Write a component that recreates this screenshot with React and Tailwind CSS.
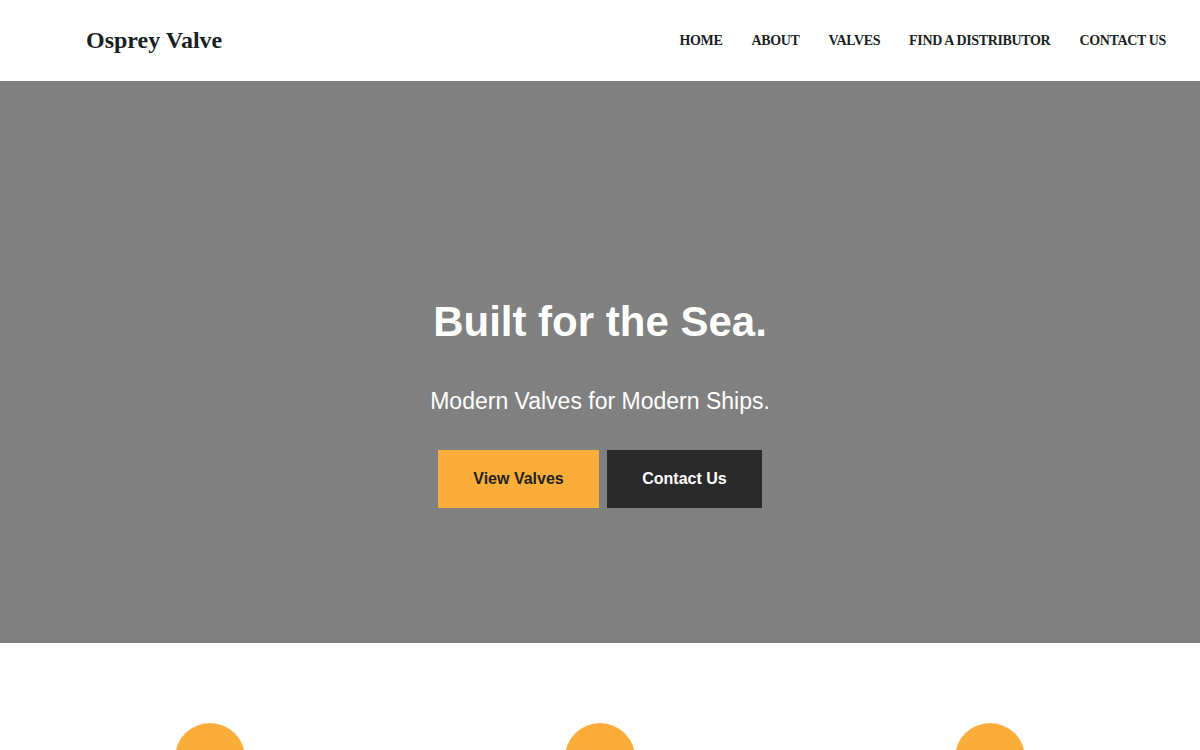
export default function App() {
  const serif = { fontFamily: '"Liberation Serif", "Times New Roman", serif' };
  const sans = { fontFamily: '"Liberation Sans", Arial, sans-serif' };
  const nav = ["HOME", "ABOUT", "VALVES", "FIND A DISTRIBUTOR", "CONTACT US"];
  return (
    <div className="w-full bg-white" style={sans}>
      <header className="h-[81px] flex items-center justify-between pl-[86px] pr-[34px] bg-white">
        <div className="text-[24px] font-bold text-[#1a1f24] leading-none -mt-[2px]" style={serif}>
          Osprey Valve
        </div>
        <nav className="flex items-center gap-[29px]" style={serif}>
          {nav.map((n) => (
            <a key={n} className="text-[14px] tracking-[-0.35px] font-bold text-[#1a1f24] leading-none">
              {n}
            </a>
          ))}
        </nav>
      </header>
      <section className="h-[562px] bg-[#808080] flex flex-col items-center pt-[216px]">
        <h1 className="text-[42px] font-bold text-white leading-[1.2]">Built for the Sea.</h1>
        <p className="mt-[41px] text-[23px] text-white leading-[1.2]">Modern Valves for Modern Ships.</p>
        <div className="mt-[34px] flex gap-[8px]">
          <button className="bg-[#fbad3a] text-[#1f1f1f] font-bold text-[16px] leading-[18px] py-5 w-[161px]">
            View Valves
          </button>
          <button className="bg-[#2a2a2a] text-white font-bold text-[16px] leading-[18px] py-5 w-[155px]">
            Contact Us
          </button>
        </div>
      </section>
      <section className="bg-white pt-[80px] pb-20">
        <div className="mx-auto w-[1170px] grid grid-cols-3">
          {[0, 1, 2].map((i) => (
            <div key={i} className="flex justify-center">
              <div className="w-[70px] h-[70px] rounded-full bg-[#fbad3a]" />
            </div>
          ))}
        </div>
      </section>
    </div>
  );
}
